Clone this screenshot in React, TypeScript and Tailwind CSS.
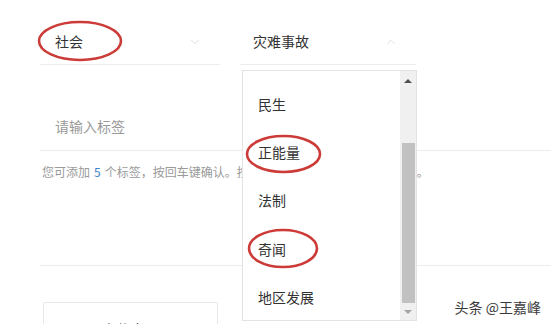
import { ChevronDown, ChevronUp } from 'lucide-react';

const options = ['民生', '正能量', '法制', '奇闻', '地区发展'];

const Ellipse = ({ x, y, w, h }: { x: number; y: number; w: number; h: number }) => (
  <svg className="absolute pointer-events-none" style={{ left: x, top: y }} width={w} height={h} viewBox={`0 0 ${w} ${h}`}>
    <ellipse cx={w / 2} cy={h / 2} rx={w / 2 - 2} ry={h / 2 - 2} fill="none" stroke="#cc3b37" strokeWidth="2.6" />
  </svg>
);

export default function App() {
  return (
    <div className="relative w-[551px] h-[324px] overflow-hidden bg-white text-[#333] font-['Noto_Sans_CJK_SC',sans-serif]">
      <div className="pl-[40px] pt-[19px]">
        <div className="flex gap-[20px]">
          <div className="w-[180px] h-[46px] flex items-center justify-between pl-[15px] pr-[18px] border-b border-[#ededed] text-[14px]">
            <span>社会</span>
            <ChevronDown className="w-[14px] h-[14px] text-[#cfcfcf]" strokeWidth={1.1} />
          </div>
          <div className="w-[176px] h-[46px] flex items-center justify-between pl-[13px] pr-[18px] border-b border-[#ededed] text-[14px]">
            <span>灾难事故</span>
            <ChevronUp className="w-[14px] h-[14px] text-[#cfcfcf]" strokeWidth={1.1} />
          </div>
        </div>

        <div className="mt-[42px] h-[44px] pb-[4px] flex items-center pl-[15px] border-b border-[#ececec] text-[14px] text-[#9a9a9a]">
          请输入标签
        </div>

        <div className="mt-[12px] pl-[2px] text-[12px] leading-[18px] text-[#9a9a9a] whitespace-nowrap">
          您可添加<span className="mx-[4px] text-[#3d7fc6]">5</span>个标签，按回车键确认。按住标签可以拖动调整标签的顺序。
        </div>

        <div className="mt-[84px] border-t border-[#ececec]" />

        <div className="mt-[36px] ml-[3px] w-[175px] h-[44px] border border-[#e8e8e8] rounded-[2px] flex justify-center pt-[16px] text-[14px]">
          上传声明
        </div>
      </div>

      <div className="absolute left-[242px] top-[70px] w-[175px] h-[251px] border border-[#e3e3e3] bg-white overflow-hidden">
        <div className="pt-[9px] pr-[16px]">
          {options.map((o) => (
            <div key={o} className="h-[48.3px] flex items-center pl-[15px] text-[14px] text-[#333]">
              {o}
            </div>
          ))}
        </div>
        <div className="absolute right-0 top-0 bottom-0 w-[16px] bg-[#f0f0f0] flex flex-col items-center">
          <div className="h-[18px] flex items-center justify-center pt-[2px]">
            <div className="w-0 h-0 border-l-[4px] border-r-[4px] border-b-[4px] border-l-transparent border-r-transparent border-b-[#505050]" />
          </div>
          <div className="mt-[54px] w-[13px] h-[160px] bg-[#c1c1c1]" />
          <div className="flex-1 flex items-center justify-center">
            <div className="w-0 h-0 border-l-[4px] border-r-[4px] border-t-[4px] border-l-transparent border-r-transparent border-t-[#a3a3a3]" />
          </div>
        </div>
      </div>

      <div className="absolute right-[10px] top-[297px] text-[14px] text-[#3a3a3a] whitespace-nowrap">
        头条 @王嘉峰
      </div>

      <Ellipse x={37} y={20} w={86} h={42} />
      <Ellipse x={245} y={134} w={77} h={40} />
      <Ellipse x={247} y={228} w={72} h={41} />
    </div>
  );
}
